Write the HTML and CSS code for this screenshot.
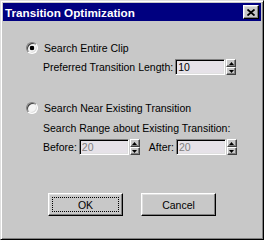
FILE: index.html
```html
<!DOCTYPE html>
<html lang="en">
<head>
    <meta charset="UTF-8">
    <title>Transition Optimization</title>
    <link rel="stylesheet" href="styles.css">
</head>
<body>
    <div class="window">
        <div class="titlebar">
            <span class="title">Transition Optimization</span>
            <button class="close">
                <svg width="8" height="7" viewBox="0 0 8 7"><path d="M0.5 0.5 L7.5 6.5 M7.5 0.5 L0.5 6.5" stroke="#000" stroke-width="1.8" fill="none"/></svg>
            </button>
        </div>

        <div class="content">
            <label class="option first">
                <input type="radio" class="radio" name="mode" checked>
                <span>Search Entire Clip</span>
            </label>
            <div class="field-row length">
                <span>Preferred Transition Length:</span>
                <input class="num" type="text" value="10">
                <span class="spin">
                    <span><svg width="5" height="3" viewBox="0 0 5 3"><path d="M2.5 0 L5 3 L0 3 Z" fill="#000"/></svg></span>
                    <span><svg width="5" height="3" viewBox="0 0 5 3"><path d="M0 0 L5 0 L2.5 3 Z" fill="#000"/></svg></span>
                </span>
            </div>

            <label class="option second">
                <input type="radio" class="radio" name="mode">
                <span>Search Near Existing Transition</span>
            </label>
            <div class="note">Search Range about Existing Transition:</div>
            <div class="field-row range">
                <span>Before:</span>
                <input class="num" type="text" value="20" disabled>
                <span class="spin">
                    <span><svg width="5" height="3" viewBox="0 0 5 3"><path d="M2.5 0 L5 3 L0 3 Z" fill="#000"/></svg></span>
                    <span><svg width="5" height="3" viewBox="0 0 5 3"><path d="M0 0 L5 0 L2.5 3 Z" fill="#000"/></svg></span>
                </span>
                <span class="after">After:</span>
                <input class="num" type="text" value="20" disabled>
                <span class="spin">
                    <span><svg width="5" height="3" viewBox="0 0 5 3"><path d="M2.5 0 L5 3 L0 3 Z" fill="#000"/></svg></span>
                    <span><svg width="5" height="3" viewBox="0 0 5 3"><path d="M0 0 L5 0 L2.5 3 Z" fill="#000"/></svg></span>
                </span>
            </div>
        </div>

        <div class="actions">
            <button class="btn default">OK</button>
            <button class="btn">Cancel</button>
        </div>
    </div>
</body>
</html>
```

FILE: styles.css
```css
body {
    margin: 0;
    background-color: #c8c8c8;
    font-family: "Liberation Sans", Arial, sans-serif;
    font-size: 10.5px;
    color: #000;
}
.window {
    width: 264px;
    height: 240px;
    box-sizing: border-box;
    padding: 2px;
    background-color: #c8c8c8;
    border: 1px solid;
    border-color: #dfdfdf #000 #000 #dfdfdf;
    box-shadow: inset 1px 1px #fff, inset -1px -1px #808080;
}
.titlebar {
    height: 18px;
    display: flex;
    align-items: center;
    justify-content: space-between;
    padding: 0 2px;
    background-color: #000080;
    color: #fff;
    font-weight: bold;
    font-size: 11.7px;
}
.close {
    width: 16px;
    height: 14px;
    padding: 0;
    display: flex;
    align-items: center;
    justify-content: center;
    background-color: #c8c8c8;
    border: 1px solid;
    border-color: #fff #000 #000 #fff;
    box-shadow: inset -1px -1px #808080, inset 1px 1px #dfdfdf;
}
.content {
    padding: 20px 0 0 23px;
}
.option {
    display: flex;
    align-items: center;
    gap: 6px;
    height: 13px;
}
.option.second {
    margin-top: 26px;
}
.radio {
    appearance: none;
    box-sizing: border-box;
    width: 12px;
    height: 12px;
    margin: 0;
    border-radius: 50%;
    border: 1px solid;
    border-color: #808080 #fff #fff #808080;
    box-shadow: inset 1px 1px #404040, inset -1px -1px #dfdfdf;
    background: #f4f4f4;
}
.radio:checked {
    background: radial-gradient(circle, #000 0 2px, #f4f4f4 2.6px);
}
.field-row {
    display: flex;
    align-items: center;
    height: 16px;
    margin-left: 17px;
}
.field-row.length {
    margin-top: 5px;
}
.field-row.range {
    margin-top: 5px;
}
.note {
    margin: 8px 0 0 17px;
    line-height: 12px;
}
.after {
    margin-left: 9px;
}
.num {
    box-sizing: border-box;
    width: 50px;
    height: 16px;
    margin: 0 0 0 2px;
    padding: 0 2px;
    font: inherit;
    color: #000;
    background-color: #e6e2e8;
    border: 1px solid;
    border-color: #808080 #fff #fff #808080;
    box-shadow: inset 1px 1px #000, inset -1px -1px #dfdfdf;
    outline: none;
}
.num:disabled {
    color: #808080;
}
.spin {
    display: flex;
    flex-direction: column;
    width: 10px;
    height: 16px;
    margin-left: 1px;
}
.spin span {
    flex: 1;
    display: flex;
    align-items: center;
    justify-content: center;
    box-sizing: border-box;
    border: 1px solid;
    border-color: #fff #404040 #404040 #fff;
    box-shadow: inset -1px -1px #808080;
}
.spin svg {
    display: block;
}
.actions {
    display: flex;
    justify-content: center;
    gap: 18px;
    margin-top: 38px;
}
.btn {
    width: 75px;
    height: 23px;
    padding: 0;
    font: inherit;
    color: #000;
    background-color: #c8c8c8;
    border: 1px solid;
    border-color: #fff #000 #000 #fff;
    box-shadow: inset -1px -1px #808080, inset 1px 1px #dfdfdf;
}
.btn.default {
    outline: 1px dotted #000;
    outline-offset: -5px;
}
```
